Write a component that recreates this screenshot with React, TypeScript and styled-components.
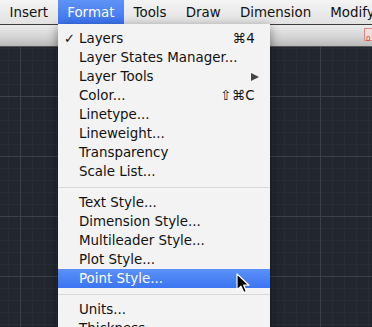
import React from 'react';
import styled, { createGlobalStyle } from 'styled-components';

type MenuEntry =
  | { kind: 'item'; label: string; checked?: boolean; shortcut?: string; submenu?: boolean; active?: boolean }
  | { kind: 'sep' };

const menuBarTitles = ['Insert', 'Format', 'Tools', 'Draw', 'Dimension', 'Modify'];

const formatMenu: MenuEntry[] = [
  { kind: 'item', label: 'Layers', checked: true, shortcut: '⌘4' },
  { kind: 'item', label: 'Layer States Manager...' },
  { kind: 'item', label: 'Layer Tools', submenu: true },
  { kind: 'item', label: 'Color...', shortcut: '⇧⌘C' },
  { kind: 'item', label: 'Linetype...' },
  { kind: 'item', label: 'Lineweight...' },
  { kind: 'item', label: 'Transparency' },
  { kind: 'item', label: 'Scale List...' },
  { kind: 'sep' },
  { kind: 'item', label: 'Text Style...' },
  { kind: 'item', label: 'Dimension Style...' },
  { kind: 'item', label: 'Multileader Style...' },
  { kind: 'item', label: 'Plot Style...' },
  { kind: 'item', label: 'Point Style...', active: true },
  { kind: 'sep' },
  { kind: 'item', label: 'Units...' },
  { kind: 'item', label: 'Thickness...' },
];

const App: React.FC = () => {
  return (
    <>
      <GlobalStyle />
      <StyledScreen>
        <StyledMenuBar>
          {menuBarTitles.map((t) => (
            <StyledBarTitle key={t} $open={t === 'Format'}>{t}</StyledBarTitle>
          ))}
        </StyledMenuBar>
        <StyledToolStrip>
          <StyledToolIcon>0</StyledToolIcon>
        </StyledToolStrip>
        <StyledCanvas />

        <StyledDropdown>
          {formatMenu.map((entry, i) =>
            entry.kind === 'sep' ? (
              <StyledSeparator key={'sep' + i} />
            ) : (
              <StyledItem key={entry.label} $active={!!entry.active}>
                <StyledCheck>{entry.checked ? '✓' : ''}</StyledCheck>
                <StyledLabel>{entry.label}</StyledLabel>
                {entry.shortcut ? <StyledShortcut>{entry.shortcut}</StyledShortcut> : null}
                {entry.submenu ? <StyledSubArrow /> : null}
              </StyledItem>
            )
          )}
        </StyledDropdown>

        <StyledCursor width="14" height="22" viewBox="0 0 14 22">
          <path
            d="M1 1 L1 17 L5 13.2 L7.8 19.6 L10.4 18.5 L7.7 12.2 L13 12.2 Z"
            fill="#000"
            stroke="#fff"
            strokeWidth="1.2"
            strokeLinejoin="round"
          />
        </StyledCursor>
      </StyledScreen>
    </>
  );
};

const GlobalStyle = createGlobalStyle`
  html, body {
    margin: 0;
    padding: 0;
    background: #22262f;
  }
  * {
    box-sizing: border-box;
  }
`;

const StyledScreen = styled.div`
  position: relative;
  width: 372px;
  height: 327px;
  overflow: hidden;
  display: flex;
  flex-direction: column;
  font-family: "DejaVu Sans", "Noto Sans", sans-serif;
  font-size: 13.4px;
  color: #111;
`;

const StyledMenuBar = styled.div`
  display: flex;
  height: 25px;
  flex-shrink: 0;
  background: linear-gradient(#f4f4f4, #e2e2e2);
  border-bottom: 1px solid #3a3a3a;
  white-space: nowrap;
`;

const StyledBarTitle = styled.div<{ $open: boolean }>`
  height: 24px;
  line-height: 25px;
  padding: 0 9.6px;
  flex-shrink: 0;
  color: ${(p) => (p.$open ? '#fff' : '#111')};
  background: ${(p) => (p.$open ? 'linear-gradient(#5f93f6, #3b73ef)' : 'transparent')};
`;

const StyledToolStrip = styled.div`
  position: relative;
  height: 22px;
  flex-shrink: 0;
  background: linear-gradient(#ececec, #d2d2d2 60%, #b9b9b9);
  border-bottom: 1px solid #555;
`;

const StyledToolIcon = styled.div`
  position: absolute;
  right: -3px;
  top: 3px;
  width: 11px;
  height: 13px;
  border: 1px solid #d88;
  background: #f3dede;
  color: #c33;
  font-size: 7px;
  line-height: 20px;
  padding-left: 1px;
`;

const StyledCanvas = styled.div`
  flex: 1;
  background-color: #22262f;
  background-image:
    linear-gradient(to right, #3b404b 1px, transparent 1px),
    linear-gradient(to bottom, #3b404b 1px, transparent 1px),
    linear-gradient(to right, #282c36 1px, transparent 1px),
    linear-gradient(to bottom, #282c36 1px, transparent 1px);
  background-size: 60px 60px, 60px 60px, 12px 12px, 12px 12px;
  background-position: 20px 0, 0 49px, 8px 0, 0 1px;
`;

const StyledDropdown = styled.div`
  position: absolute;
  left: 58px;
  top: 24px;
  width: 212px;
  padding-top: 5px;
  background: #f3f3f3;
  box-shadow: 0 3px 10px rgba(0, 0, 0, 0.45);
`;

const StyledItem = styled.div<{ $active: boolean }>`
  display: flex;
  align-items: center;
  height: 19px;
  padding: 0 15px 0 6px;
  white-space: nowrap;
  color: ${(p) => (p.$active ? '#fff' : '#111')};
  background: ${(p) => (p.$active ? 'linear-gradient(#5c91f7, #3a74f2)' : 'transparent')};
`;

const StyledCheck = styled.span`
  width: 15px;
  flex-shrink: 0;
  font-size: 13px;
`;

const StyledLabel = styled.span`
  flex: 1;
`;

const StyledShortcut = styled.span`
  letter-spacing: 0.3px;
`;

const StyledSubArrow = styled.span`
  width: 0;
  height: 0;
  margin-right: -4px;
  border-top: 4.5px solid transparent;
  border-bottom: 4.5px solid transparent;
  border-left: 8px solid #444;
`;

const StyledSeparator = styled.div`
  height: 12px;
  display: flex;
  align-items: center;
  &::after {
    content: '';
    flex: 1;
    height: 1px;
    background: #d8d8d8;
  }
`;

const StyledCursor = styled.svg`
  position: absolute;
  left: 236px;
  top: 273px;
`;

export default App;
